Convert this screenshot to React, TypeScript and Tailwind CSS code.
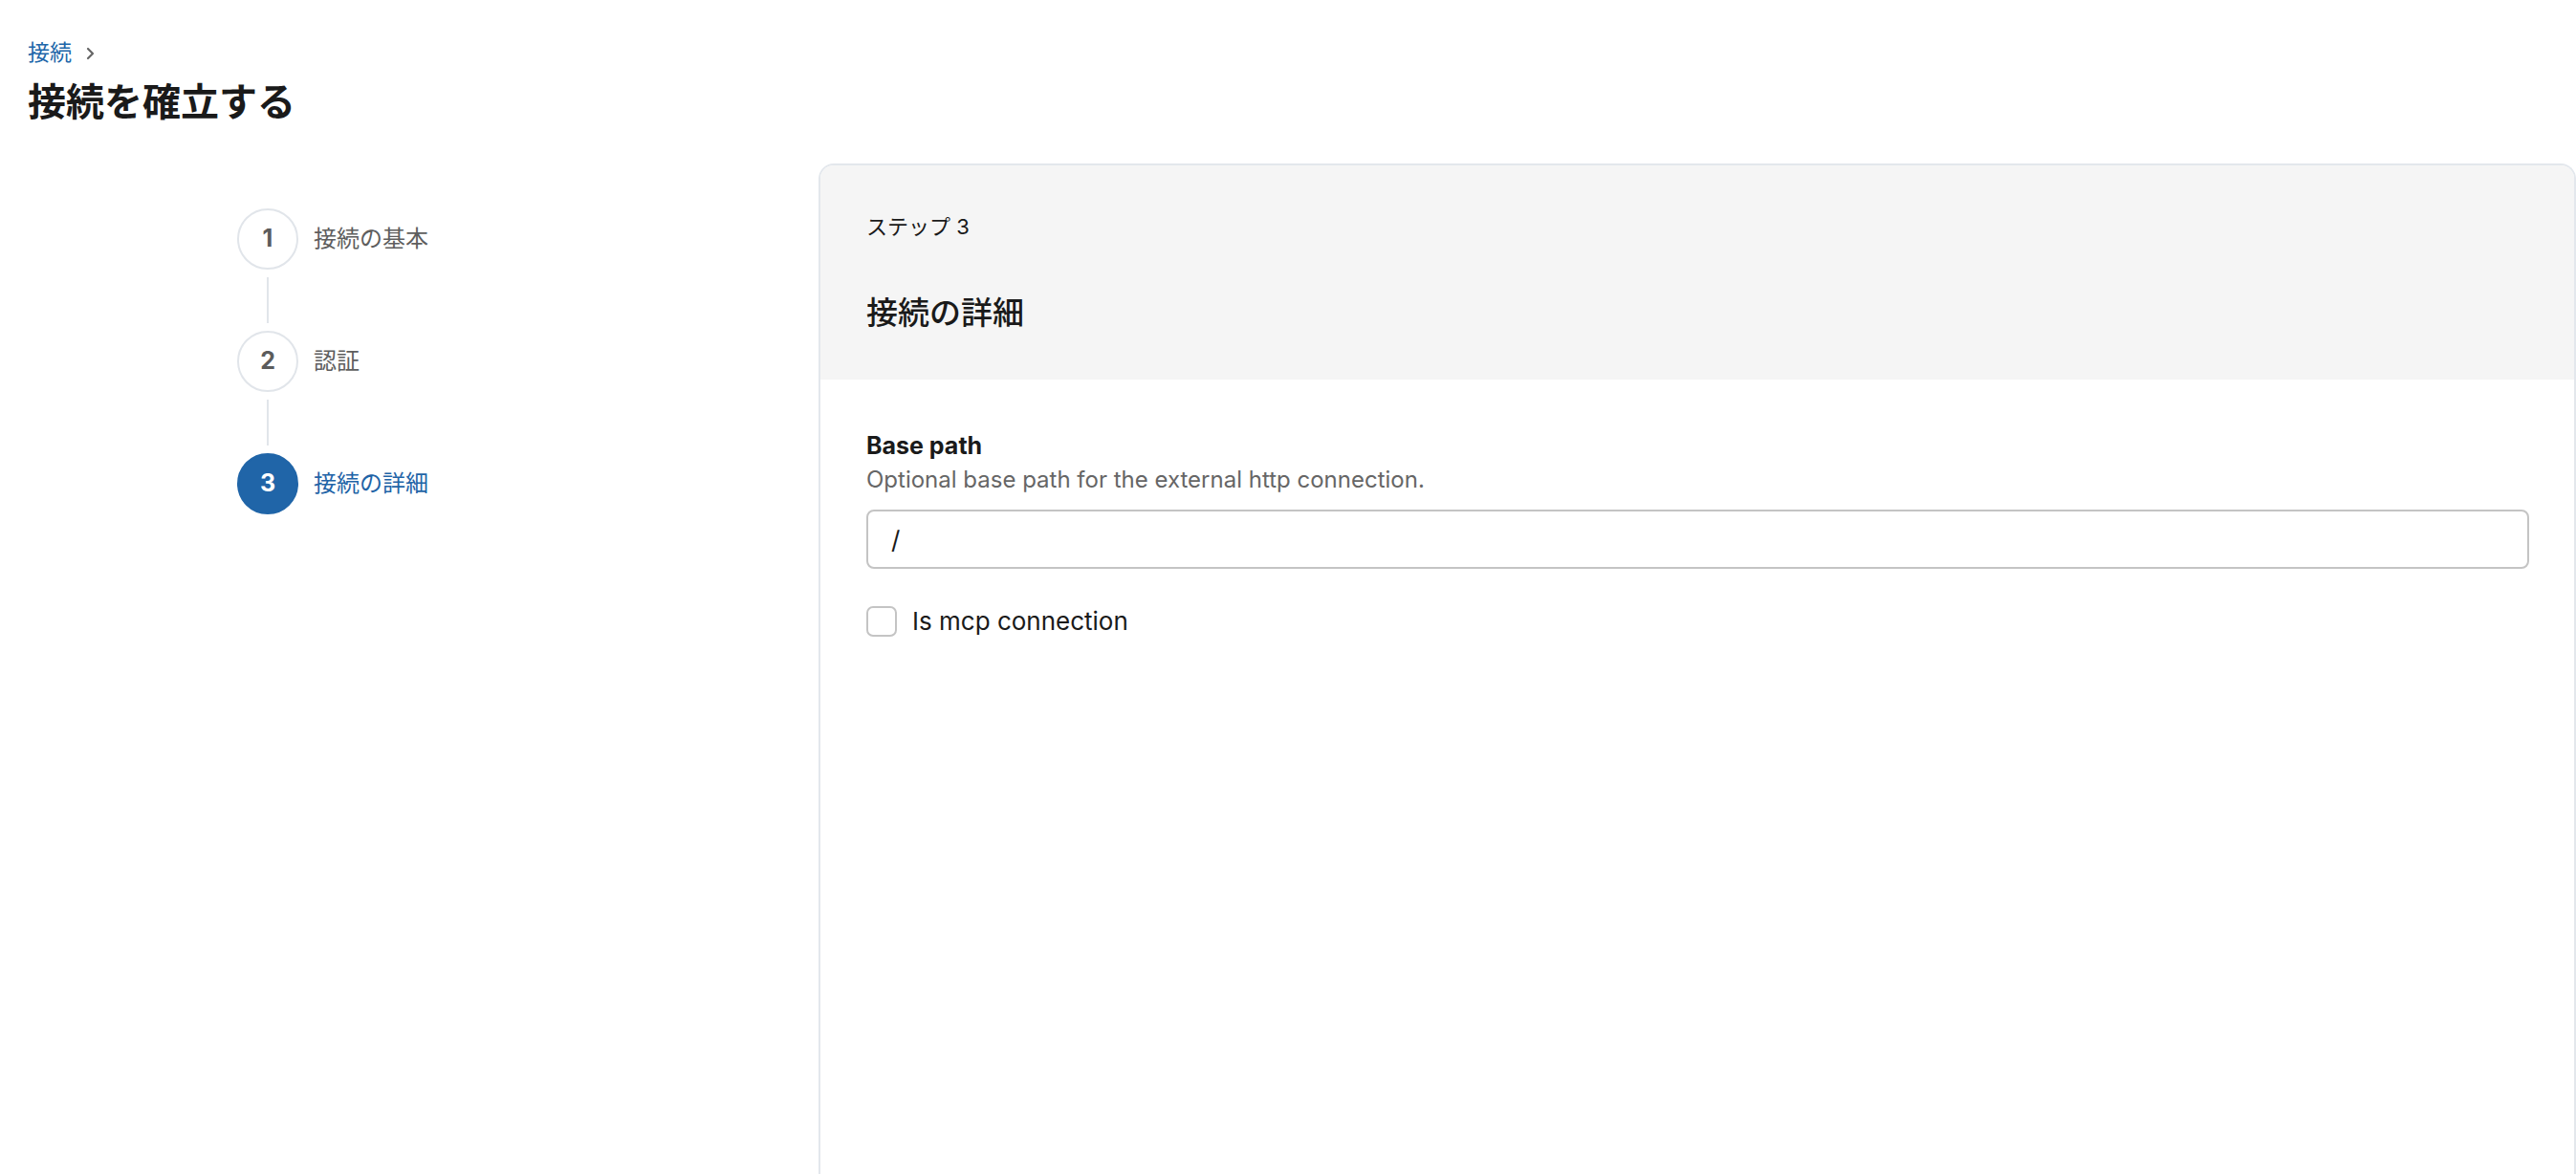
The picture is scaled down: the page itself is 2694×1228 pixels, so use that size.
import React from 'react'

const steps = [
  { n: 1, label: '接続の基本' },
  { n: 2, label: '認証' },
  { n: 3, label: '接続の詳細' },
]

function StepList({ current }: { current: number }) {
  return (
    <div className="flex flex-col">
      {steps.map((s, i) => {
        const active = s.n === current
        return (
          <div key={s.n} className="flex flex-col">
            <div className="flex items-center gap-[16px]">
              <div
                className={
                  active
                    ? 'w-[64px] h-[64px] rounded-full bg-[#2065a8] border-2 border-[#2065a8] flex items-center justify-center text-white text-[25px] font-bold'
                    : 'w-[64px] h-[64px] rounded-full bg-white border-2 border-[#e1e5ea] flex items-center justify-center text-[#5c5c5c] text-[25px] font-bold'
                }
              >
                {s.n}
              </div>
              <span className={active ? 'text-[24px] text-[#1f64a7]' : 'text-[24px] text-[#5e5e5e]'}>{s.label}</span>
            </div>
            {i < steps.length - 1 && (
              <div className="h-[64px] pl-[31px] pt-[8px]">
                <div className="w-[2px] h-[48px] bg-[#e1e5ea]" />
              </div>
            )}
          </div>
        )
      })}
    </div>
  )
}

export default function App() {
  return (
    <div className="min-h-screen bg-white text-[#1a1a1a] font-['Inter','Noto_Sans_CJK_JP',sans-serif] overflow-hidden">
      <div className="pl-[29px] pt-[40px]">
        <div className="flex items-center gap-[15px] h-[30px]">
          <a className="text-[23px] leading-[30px] text-[#2066a9]">接続</a>
          <svg width="10" height="14" viewBox="0 0 10 14" className="mt-[2px]">
            <polyline points="2,2 7,7 2,12" fill="none" stroke="#666" strokeWidth="2.2" strokeLinecap="round" strokeLinejoin="round" />
          </svg>
        </div>
        <h1 className="mt-[12px] text-[40px] leading-[50px] font-bold">接続を確立する</h1>
      </div>

      <div className="flex mt-[39px]">
        <div className="w-[856px] shrink-0 pl-[248px] pt-[47px]">
          <StepList current={3} />
        </div>

        <div className="flex-1 h-[1057px] rounded-t-[16px] border-2 border-b-0 border-[#e3e7ec] overflow-hidden">
          <div className="bg-[#f5f5f5] px-[48px] pt-[49px] pb-[50px]">
            <div className="text-[22px] leading-[30px]">ステップ 3</div>
            <h2 className="mt-[55px] text-[33px] leading-[40px] font-medium">接続の詳細</h2>
          </div>

          <div className="pl-[48px] pr-[47px] pt-[54px]">
            <div className="text-[25px] leading-[30px] font-bold">Base path</div>
            <div className="mt-[6px] text-[24px] leading-[30px] text-[#666]">Optional base path for the external http connection.</div>
            <div className="mt-[16px] h-[62px] border-2 border-[#c4c4c4] rounded-[8px] flex items-center pl-[24px]">
              <input
                className="w-full outline-none text-[26px] text-[#1a1a1a] bg-transparent"
                defaultValue="/"
              />
            </div>
            <label className="mt-[39px] flex items-center gap-[16px]">
              <span className="w-[32px] h-[32px] border-2 border-[#c4c4c4] rounded-[7px] bg-white" />
              <span className="text-[26px] leading-[32px]">Is mcp connection</span>
            </label>
          </div>
        </div>
      </div>
    </div>
  )
}
